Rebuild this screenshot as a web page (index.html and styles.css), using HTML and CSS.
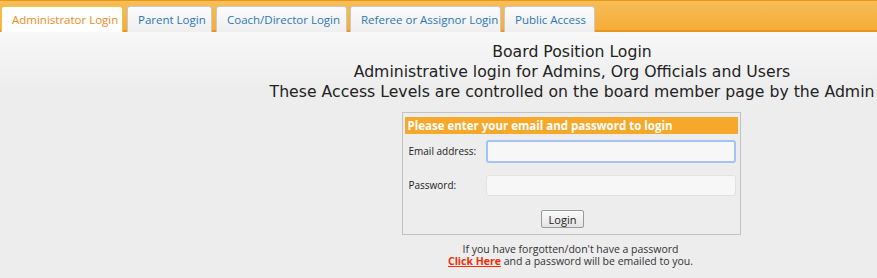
FILE: index.html
```html
<!DOCTYPE html>
<html>
<head>
<meta charset="utf-8">
<link rel="stylesheet" href="styles.css">
</head>
<body>
<div class="tabbar">
  <a class="tab active">Administrator Login</a>
  <a class="tab">Parent Login</a>
  <a class="tab">Coach/Director Login</a>
  <a class="tab">Referee or Assignor Login</a>
  <a class="tab">Public Access</a>
</div>
<div class="page">
  <div class="spacer"></div>
  <div class="main">
    <div class="intro">
      <div>Board Position Login</div>
      <div>Administrative login for Admins, Org Officials and Users</div>
      <div>These Access Levels are controlled on the board member page by the Admin</div>
    </div>
    <div class="loginbox">
      <div class="boxhead">Please enter your email and password to login</div>
      <div class="row">
        <label class="lbl">Email address:</label>
        <input class="field focus" type="text">
      </div>
      <div class="row">
        <label class="lbl">Password:</label>
        <input class="field" type="password">
      </div>
      <div class="btnrow"><button class="btn">Login</button></div>
    </div>
    <div class="forgot">
      <div class="fline">If you have forgotten/don't have a password</div>
      <div class="fline"><span class="click">Click Here</span><span> and a password will be emailed to you.</span></div>
    </div>
  </div>
</div>
</body>
</html>
```
FILE: styles.css
```css
html, body {
  margin: 0;
  padding: 0;
}
body {
  width: 877px;
  height: 278px;
  overflow: hidden;
  font-family: "Open Sans", "DejaVu Sans", sans-serif;
  background: linear-gradient(#f8f8f8 30px, #ededed 90px, #ededed);
  color: #222;
}
.tabbar {
  padding: 5px 0 0 1px;
  display: flex;
  gap: 4px;
  background: linear-gradient(#f7bd57, #f5ad38);
  border-top: 1px solid #e9961f;
  border-bottom: 2px solid #ec951c;
  box-sizing: content-box;
  height: 24px;
}
.tab {
  display: flex;
  align-items: center;
  box-sizing: border-box;
  height: 26px;
  margin-bottom: -2px;
  padding: 0 10px 0 10px;
  font-size: 11.5px;
  color: #2a78b5;
  background: linear-gradient(#fbfbfb, #efefef);
  border: 1px solid #c9c9c9;
  border-bottom: none;
  border-radius: 3px 3px 0 0;
  white-space: nowrap;
}
.tab:nth-child(1) { width: 122px; }
.tab:nth-child(2) { width: 85px; }
.tab:nth-child(3) { width: 131px; }
.tab:nth-child(4) { width: 151px; margin-left: -1px; }
.tab:nth-child(5) { width: 91px; margin-left: -1px; }
.tab.active {
  color: #f08a1c;
  background: #fff;
  border: 1px solid #f3c04c;
  border-bottom: none;
}
.page {
  display: flex;
}
.spacer {
  width: 267px;
  flex: none;
}
.main {
  width: 610px;
  display: flex;
  flex-direction: column;
  align-items: center;
}
.intro {
  margin-top: 10px;
  text-align: center;
  font-family: "DejaVu Sans", sans-serif;
  font-size: 15.7px;
  line-height: 20px;
  color: #222;
  white-space: nowrap;
}
.loginbox {
  margin-top: 10px;
  margin-left: -2px;
  width: 339px;
  box-sizing: border-box;
  border: 1px solid #c2c2c2;
  padding: 4px 2px 6px 2px;
}
.boxhead {
  background: #f6a82a;
  color: #fff;
  font-weight: bold;
  font-size: 11.5px;
  height: 17px;
  line-height: 17px;
  padding-left: 3px;
}
.row {
  display: flex;
  align-items: center;
  margin-top: 5px;
  height: 24px;
}
.row + .row {
  margin-top: 10px;
}
.lbl {
  width: 77px;
  padding-left: 4px;
  font-size: 10px;
  color: #222;
  flex: none;
}
.field {
  box-sizing: border-box;
  width: 250px;
  height: 21px;
  border: 1px solid #e2e2e2;
  border-radius: 3px;
  background: #f7f7f7;
  margin: 0;
  padding: 0;
}
.field.focus {
  height: 23px;
  border: 2px solid #a6c1f3;
}
.btnrow {
  display: flex;
  justify-content: center;
  margin-top: 13px;
}
.btn {
  font-family: "Open Sans", "DejaVu Sans", sans-serif;
  font-size: 11px;
  height: 18px;
  width: 43px;
  padding: 0;
  margin-left: -17px;
  border: 1px solid #9a9a9a;
  border-radius: 2px;
  background: linear-gradient(#fbfbfb, #e4e4e4);
  color: #222;
}
.forgot {
  margin-top: 8px;
  margin-left: -3px;
  text-align: center;
  font-size: 10.5px;
  color: #333;
}
.fline {
  height: 12px;
  line-height: 12px;
  white-space: nowrap;
}
.click {
  color: #f22d05;
  font-weight: bold;
  text-decoration: underline;
}
```
